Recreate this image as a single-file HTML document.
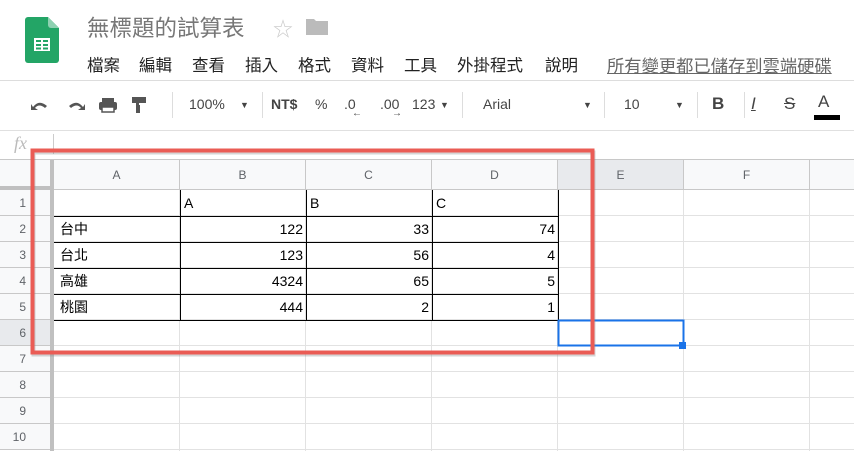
<!DOCTYPE html>
<html><head><meta charset="utf-8"><style>
*{margin:0;padding:0;box-sizing:border-box}
body{width:854px;height:451px;overflow:hidden;background:#fff;position:relative;font-family:"Liberation Sans","Noto Sans CJK TC",sans-serif;color:#202124}
.a{position:absolute}
.menu span{position:absolute;top:0}
.tb{font-size:14px;color:#444;top:96px}
.sep{position:absolute;top:92px;width:1px;height:26px;background:#ddd}
.ch{position:absolute;top:160px;height:30px;border-right:1px solid #c8c8c8;border-bottom:1px solid #c8c8c8;background:#f8f9fa;font-size:12px;color:#5f6368;text-align:center;line-height:30px}
.rh{position:absolute;left:0;width:54px;height:26px;border-bottom:1px solid #c8c8c8;background:#f8f9fa;font-size:12px;color:#5f6368;text-align:right;padding-right:28px;line-height:26px}
.cell{position:absolute;height:26px;font-size:14px;line-height:26px;padding:0 3px;color:#000}
</style></head><body>
<svg class="a" style="left:25px;top:17px" width="34" height="46" viewBox="0 0 34 46">
<path d="M3 0H23L34 11V43a3 3 0 0 1-3 3H3a3 3 0 0 1-3-3V3a3 3 0 0 1 3-3z" fill="#23a566"/>
<path d="M23 0L34 11H26a3 3 0 0 1-3-3z" fill="#8ed1b1"/>
<rect x="9" y="21" width="16" height="13" fill="#fff"/>
<rect x="11" y="23" width="5" height="2" fill="#23a566"/><rect x="18" y="23" width="5" height="2" fill="#23a566"/>
<rect x="11" y="27" width="5" height="2" fill="#23a566"/><rect x="18" y="27" width="5" height="2" fill="#23a566"/>
<rect x="11" y="30.5" width="5" height="2" fill="#23a566"/><rect x="18" y="30.5" width="5" height="2" fill="#23a566"/>
</svg>
<div class="a" style="left:87px;top:11px;font-size:22.5px;color:#777">無標題的試算表</div>
<div class="a" style="left:273px;top:13px;font-size:20px;color:#ccc">☆</div>
<svg class="a" style="left:306px;top:17px" width="22" height="18"><path d="M0 2h8l2 2h12v14H0z" fill="#bbb"/></svg>
<div class="a menu" style="left:0;top:52px;font-size:16.5px;color:#222;white-space:nowrap;width:600px;height:24px">
<span style="left:87px">檔案</span><span style="left:139px">編輯</span><span style="left:192px">查看</span><span style="left:245px">插入</span><span style="left:298px">格式</span><span style="left:351px">資料</span><span style="left:404px">工具</span><span style="left:457px">外掛程式</span><span style="left:545px">說明</span></div>
<div class="a" style="left:607px;top:52px;font-size:17.3px;color:#666;text-decoration:underline;white-space:nowrap">所有變更都已儲存到雲端硬碟</div>
<div class="a" style="left:0;top:80px;width:854px;height:1px;background:#ddd"></div>
<svg class="a" style="left:30px;top:96px" width="130" height="18" fill="#555">
<path d="M3 11 Q9 3 17 10 L15 12 Q9 7 5 12 L8 14 H1 V8z"/>
<path d="M53 11 Q47 3 39 10 L41 12 Q47 7 51 12 L48 14 H55 V8z"/>
<rect x="72" y="2" width="12" height="4"/><rect x="69" y="6" width="18" height="8" rx="2"/><rect x="72" y="11" width="12" height="5" fill="#fff" stroke="#555" stroke-width="1.5"/>
<rect x="102" y="1" width="14" height="6"/><rect x="106" y="7" width="3" height="3"/><rect x="106" y="9" width="4" height="8"/>
</svg>
<div class="sep" style="left:172px"></div>
<div class="a tb" style="left:189px">100%</div>
<div class="a tb" style="left:240px;font-size:9px;top:100px">▼</div>
<div class="sep" style="left:262px"></div>
<div class="a tb" style="left:271px;font-weight:bold">NT$</div>
<div class="a tb" style="left:315px">%</div>
<div class="a tb" style="left:344px">.0</div>
<div class="a" style="left:352px;top:108px;font-size:10px;color:#444">←</div>
<div class="a tb" style="left:380px">.00</div>
<div class="a" style="left:392px;top:108px;font-size:10px;color:#444">→</div>
<div class="a tb" style="left:412px">123</div>
<div class="a tb" style="left:440px;font-size:9px;top:100px">▼</div>
<div class="sep" style="left:462px"></div>
<div class="a tb" style="left:483px">Arial</div>
<div class="a tb" style="left:583px;font-size:9px;top:100px">▼</div>
<div class="sep" style="left:604px"></div>
<div class="a tb" style="left:624px">10</div>
<div class="a tb" style="left:675px;font-size:9px;top:100px">▼</div>
<div class="sep" style="left:697px"></div>
<div class="a tb" style="left:712px;font-size:17px;font-weight:bold;top:94px">B</div>
<div class="sep" style="left:744px"></div>
<div class="a tb" style="left:751px;font-size:17px;font-style:italic;top:94px;text-decoration:underline">I</div>
<div class="a tb" style="left:784px;font-size:17px;top:94px;text-decoration:line-through">S</div>
<div class="a tb" style="left:818px;font-size:17px;top:92px">A</div>
<div class="a" style="left:814px;top:115px;width:26px;height:5px;background:#000"></div>
<div class="a" style="left:0;top:130px;width:854px;height:1px;background:#e0e0e0"></div>
<div class="a" style="left:14px;top:133px;font-family:'Liberation Serif',serif;font-style:italic;font-size:18px;color:#bbb">fx</div>
<div class="a" style="left:53px;top:134px;width:1px;height:20px;background:#ccc"></div>
<div class="a" style="left:0;top:159px;width:854px;height:1px;background:#c8c8c8"></div>
<div class="ch" style="left:0;width:54px;border-right:4px solid #c0c0c0;border-bottom:4px solid #c0c0c0"></div>
<div class="ch" style="left:54px;width:126px">A</div>
<div class="ch" style="left:180px;width:126px">B</div>
<div class="ch" style="left:306px;width:126px">C</div>
<div class="ch" style="left:432px;width:126px">D</div>
<div class="ch" style="left:558px;width:126px;background:#e8eaed">E</div>
<div class="ch" style="left:684px;width:126px">F</div>
<div class="ch" style="left:810px;width:50px"></div>
<div class="a" style="left:54px;top:190px;width:800px;height:261px;background:
repeating-linear-gradient(to bottom,transparent 0 25px,#e2e2e2 25px 26px),
linear-gradient(to right,transparent 125px,#e2e2e2 125px 126px,transparent 126px 251px,#e2e2e2 251px 252px,transparent 252px 377px,#e2e2e2 377px 378px,transparent 378px 503px,#e2e2e2 503px 504px,transparent 504px 629px,#e2e2e2 629px 630px,transparent 630px 755px,#e2e2e2 755px 756px,transparent 756px)"></div>
<div class="rh" style="top:190px">1</div>
<div class="rh" style="top:216px">2</div>
<div class="rh" style="top:242px">3</div>
<div class="rh" style="top:268px">4</div>
<div class="rh" style="top:294px">5</div>
<div class="rh" style="top:320px;background:#e8eaed">6</div>
<div class="rh" style="top:346px">7</div>
<div class="rh" style="top:372px">8</div>
<div class="rh" style="top:398px">9</div>
<div class="rh" style="top:424px">10</div>
<div class="a" style="left:50px;top:160px;width:4px;height:291px;background:#c0c0c0"></div>
<svg class="a" style="left:0;top:0" width="854" height="451">
<g stroke="#000" stroke-width="1" fill="none">
<path d="M180.5 190V320M306.5 190V320M432.5 190V320M558.5 190V320"/>
<path d="M54 216.5H558M54 242.5H558M54 268.5H558M54 294.5H558M54 320.5H558"/>
</g>
<rect x="558.5" y="320.5" width="125" height="25" fill="none" stroke="#1a73e8" stroke-width="2"/>
<rect x="679" y="342" width="7" height="7" fill="#1a73e8"/>
<rect x="33.5" y="152.5" width="560" height="202" fill="none" stroke="#888" stroke-opacity="0.35" stroke-width="4"/>
<rect x="32.5" y="150.5" width="560" height="202" fill="none" stroke="#ea5c55" stroke-width="4"/>
</svg>
<div class="cell" style="left:181px;top:190px">A</div>
<div class="cell" style="left:307px;top:190px">B</div>
<div class="cell" style="left:433px;top:190px">C</div>
<div class="cell" style="left:57px;top:216px">台中</div>
<div class="cell" style="left:57px;top:242px">台北</div>
<div class="cell" style="left:57px;top:268px">高雄</div>
<div class="cell" style="left:57px;top:294px">桃園</div>
<div class="cell" style="left:180px;width:126px;text-align:right;top:216px">122</div>
<div class="cell" style="left:180px;width:126px;text-align:right;top:242px">123</div>
<div class="cell" style="left:180px;width:126px;text-align:right;top:268px">4324</div>
<div class="cell" style="left:180px;width:126px;text-align:right;top:294px">444</div>
<div class="cell" style="left:306px;width:126px;text-align:right;top:216px">33</div>
<div class="cell" style="left:306px;width:126px;text-align:right;top:242px">56</div>
<div class="cell" style="left:306px;width:126px;text-align:right;top:268px">65</div>
<div class="cell" style="left:306px;width:126px;text-align:right;top:294px">2</div>
<div class="cell" style="left:432px;width:126px;text-align:right;top:216px">74</div>
<div class="cell" style="left:432px;width:126px;text-align:right;top:242px">4</div>
<div class="cell" style="left:432px;width:126px;text-align:right;top:268px">5</div>
<div class="cell" style="left:432px;width:126px;text-align:right;top:294px">1</div>
</body></html>
